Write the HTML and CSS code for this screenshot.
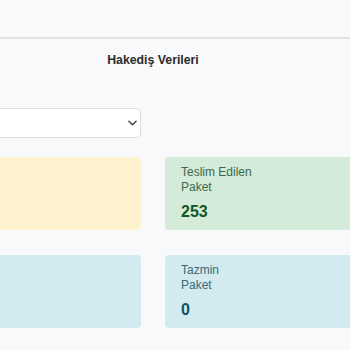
FILE: index.html
```html
<!DOCTYPE html>
<html lang="tr">
<head>
    <meta charset="UTF-8">
    <meta name="viewport" content="width=device-width, initial-scale=1.0">
    <title>Hakediş Verileri</title>
    <link rel="stylesheet" href="styles.css">
</head>
<body>
    <header class="topbar"></header>
    <main class="content">
        <h2 class="title">Hakediş Verileri</h2>
        <div class="grid">
            <div class="select-wrap">
                <select class="period-select">
                    <option></option>
                </select>
                <svg class="chevron" viewBox="0 0 10 6" width="9" height="6">
                    <path d="M1 1l4 4 4-4" fill="none" stroke="#444" stroke-width="1.6" stroke-linecap="round" stroke-linejoin="round"/>
                </svg>
            </div>
            <div></div>
            <div class="card card-warning"></div>
            <div class="card card-success">
                <div class="card-label">Teslim Edilen<br>Paket</div>
                <div class="card-value">253</div>
            </div>
            <div class="card card-info"></div>
            <div class="card card-info">
                <div class="card-label">Tazmin<br>Paket</div>
                <div class="card-value">0</div>
            </div>
        </div>
    </main>
</body>
</html>
```

FILE: styles.css
```css
:root {
    --bg-color: #f8f9fa;
    --line-color: #e1e3e5;
    --text-color: #2b2b2b;
}

body {
    margin: 0;
    background-color: var(--bg-color);
    font-family: "Liberation Sans", Arial, sans-serif;
    color: var(--text-color);
    overflow: hidden;
}

.topbar {
    height: 37px;
    border-bottom: 2px solid var(--line-color);
}

/* the page is wider than the window, its left side runs off screen */
.content {
    margin-left: -120px;
    width: 546px;
}

.title {
    margin: 14px 0 0;
    font-size: 12.3px;
    line-height: 15px;
    font-weight: bold;
    text-align: center;
}

.grid {
    display: grid;
    grid-template-columns: 1fr 1fr;
    column-gap: 24px;
    row-gap: 25px;
    margin-top: 40px;
}

.select-wrap {
    position: relative;
    margin-bottom: -6px;
}

.period-select {
    display: block;
    width: 100%;
    height: 30px;
    background: #fff;
    border: 1px solid #dcdfe2;
    border-radius: 4px;
    appearance: none;
    -webkit-appearance: none;
    outline: none;
}

.chevron {
    position: absolute;
    right: 4px;
    top: 12px;
}

.card {
    height: 73px;
    box-sizing: border-box;
    padding: 8px 16px 0;
    border-radius: 4px;
}

.card-label {
    font-size: 12px;
    line-height: 15px;
}

.card-value {
    margin-top: 7px;
    font-size: 16px;
    line-height: 19px;
    font-weight: bold;
}

.card-warning {
    background-color: #fff2cf;
}

.card-success {
    background-color: #d4ebd9;
    color: #155724;
}

.card-success .card-label {
    color: #3c6a49;
}

.card-info {
    background-color: #d2eaf0;
    color: #0c5460;
}

.card-info .card-label {
    color: #3b6a73;
}
```
